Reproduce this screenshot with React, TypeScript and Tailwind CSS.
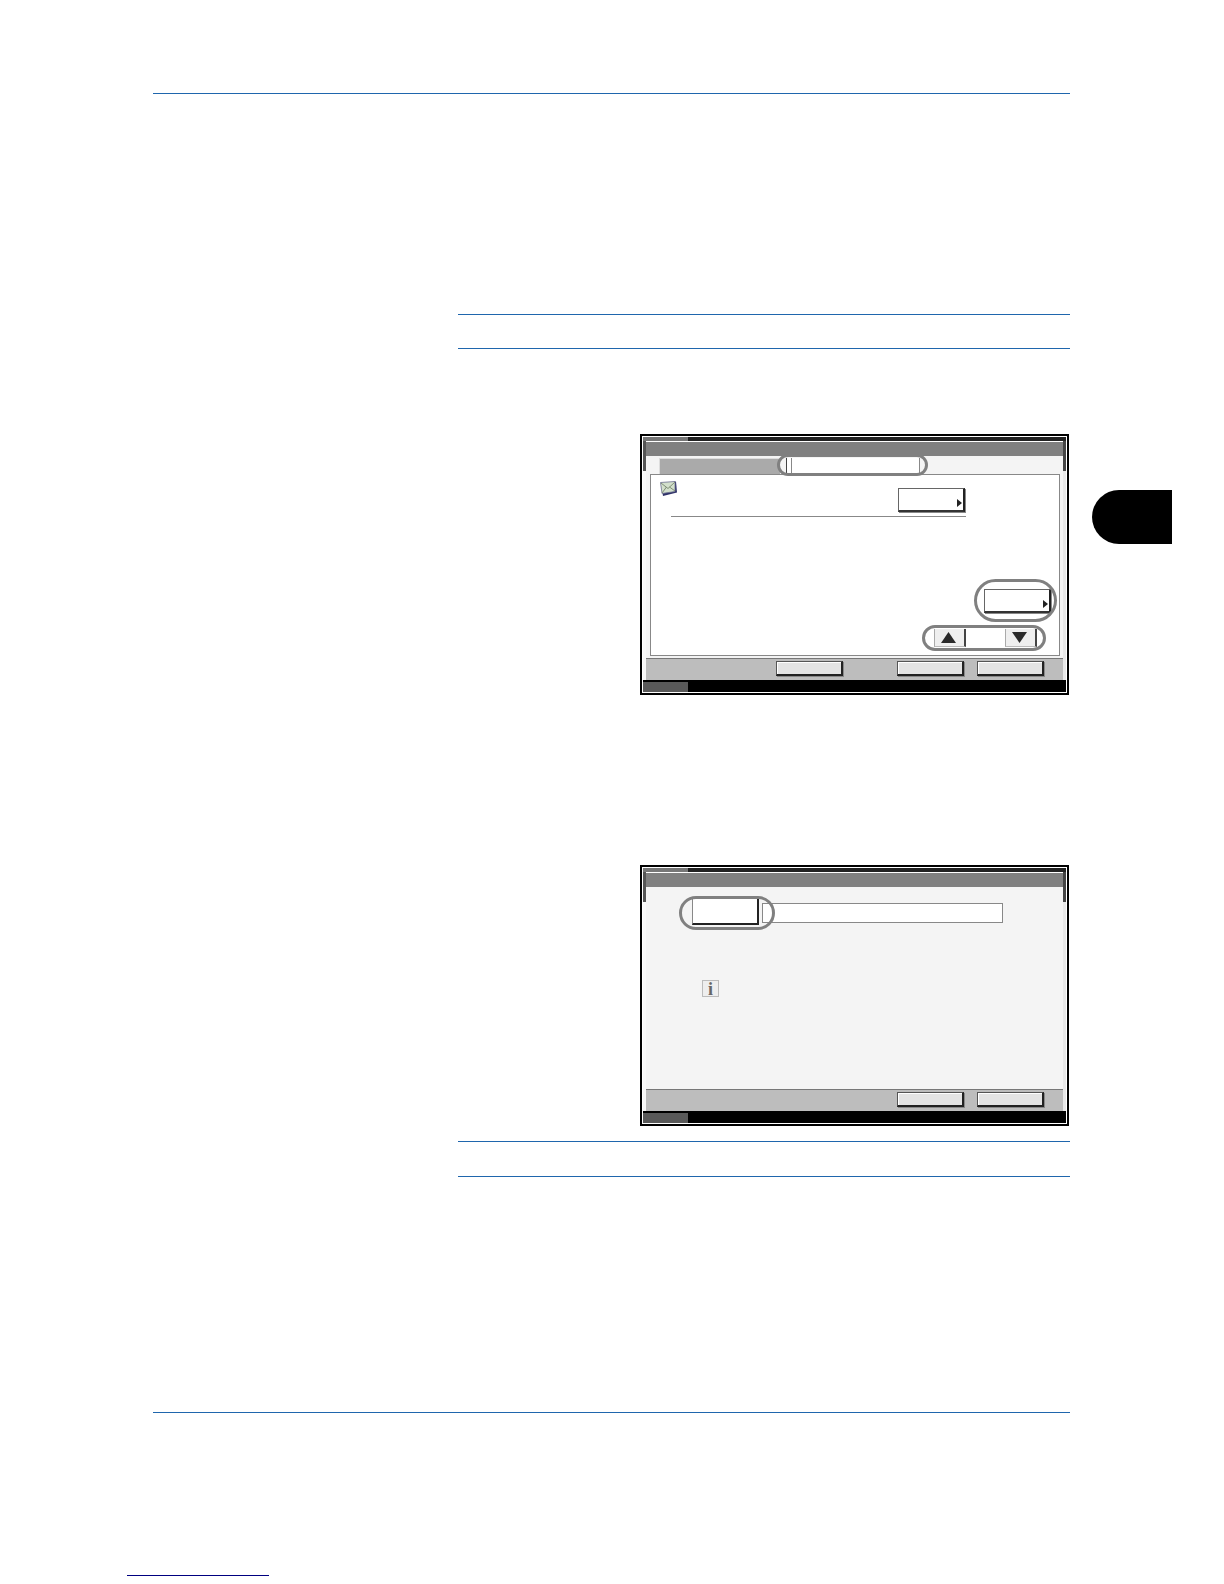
import type { ReactNode } from "react";

function Rule() {
  return <div className="h-px bg-[#1f66ad]" />;
}

function FooterButton({ className = "" }: { className?: string }) {
  return (
    <div
      className={`w-[67px] h-[15px] bg-[#e4e4e4] border border-[#555] border-r-2 border-b-2 border-r-[#222] border-b-[#222] shadow-[inset_1px_1px_0_#fff,1px_1px_0_#888] ${className}`}
    />
  );
}

function ArrowButton({ className = "" }: { className?: string }) {
  return (
    <div
      className={`w-[67px] h-[24px] flex items-end justify-end pr-[1px] pb-[3px] bg-white border border-[#666] border-r-2 border-b-2 border-r-[#222] border-b-[#333] shadow-[1px_1px_0_#888] ${className}`}
    >
      <svg width="5" height="8" viewBox="0 0 5 8">
        <path d="M0 0L5 4L0 8Z" fill="#222" />
      </svg>
    </div>
  );
}

function ScrollButton({ up }: { up?: boolean }) {
  return (
    <div className="w-[32px] h-[18px] flex items-center justify-center pr-[3px] bg-[#efefef] border-l border-[#aaa] border-r-2 border-r-[#444] border-b border-b-[#bbb]">
      <svg width="15" height="11" viewBox="0 0 15 11">
        <path d={up ? "M7.5 0L15 11H0Z" : "M0 0H15L7.5 11Z"} fill="#2a2a2a" />
      </svg>
    </div>
  );
}

// gray rounded marker drawn over the screen shot
function Oval({ className }: { className: string }) {
  return <div className={`absolute border-[3px] border-[#808080] rounded-full ${className}`} />;
}

function MailIcon() {
  return (
    <svg width="17" height="15" viewBox="0 0 17 15">
      <path d="M1 2.5L16 0.5L17 11.5L3 15Z" fill="#2f3168" />
      <path d="M0.5 1.5L15 0.5L15 10.5L2 12.5Z" fill="#d3e0cc" stroke="#6d7090" strokeWidth="0.8" />
      <path d="M1 2L8 7.5L15 1M2 12L6.5 6M15 10L9.5 6" fill="none" stroke="#75856c" strokeWidth="0.9" />
    </svg>
  );
}

function Screen({ children, footer, overlays }: { children: ReactNode; footer: ReactNode; overlays: ReactNode }) {
  return (
    <div className="relative w-[429px] h-[261px] shrink-0 border-2 border-black p-px bg-white flex flex-col">
      <div className="h-[4px] bg-[#222] shrink-0">
        <div className="w-[45px] h-full bg-[#777]" />
      </div>
      <div className="flex-1 flex min-h-0">
        <div className="w-[3px] bg-[#f8f8f8]">
          <div className="h-[30px] bg-[#555]" />
        </div>
        <div className="flex-1 flex flex-col min-w-0 pt-px">
          <div className="h-[14px] bg-[#808080] shrink-0" />
          <div className="flex-1 bg-[#f4f4f4] flex flex-col min-h-0">{children}</div>
          <div className="h-[22px] shrink-0 bg-[#bdbdbd] border-t border-[#777] pt-[2px] pr-[19px] flex justify-end gap-[13px]">
            {footer}
          </div>
        </div>
        <div className="w-[3px] bg-[#e8e8e8]">
          <div className="h-[30px] bg-[#444]" />
        </div>
      </div>
      <div className="h-[12px] shrink-0 bg-black pt-[2px]">
        <div className="w-[45px] h-[10px] bg-[#595959]" />
      </div>
      {overlays}
    </div>
  );
}

function SendScreen() {
  return (
    <Screen
      footer={
        <>
          <FooterButton className="mr-[41px]" />
          <FooterButton />
          <FooterButton />
        </>
      }
      overlays={
        <>
          <Oval className="left-[135px] top-[18px] w-[151px] h-[22px]" />
          <Oval className="left-[332px] top-[143px] w-[83px] h-[43px]" />
          <Oval className="left-[280px] top-[189px] w-[124px] h-[26px]" />
        </>
      }
    >
      {/* tabs */}
      <div className="h-[18px] shrink-0 pl-[13px] pt-[2px] flex">
        <div className="w-[121px] h-[16px] bg-[#aaaaaa] border-t border-l border-[#ddd]" />
        <div className="w-[134px] h-[16px] bg-white border-l border-l-[#444] border-r border-r-[#888] ml-[6px]">
          <div className="w-[5px] h-full border-r border-[#888]" />
        </div>
      </div>
      {/* panel */}
      <div className="h-[182px] shrink-0 ml-[4px] mr-[3px] bg-white border border-[#888] flex flex-col">
        <div className="flex items-start pl-[9px] pt-[6px]">
          <MailIcon />
          <ArrowButton className="ml-[221px] mt-[7px]" />
        </div>
        <div className="ml-[20px] mt-[4px] w-[295px] h-px bg-[#888]" />
        <ArrowButton className="self-end mr-[8px] mt-[72px]" />
        <div className="self-end mr-[22px] mt-[16px] flex gap-[39px]">
          <ScrollButton up />
          <ScrollButton />
        </div>
      </div>
    </Screen>
  );
}

function NameScreen() {
  return (
    <Screen
      footer={
        <>
          <FooterButton />
          <FooterButton />
        </>
      }
      overlays={<Oval className="left-[37px] top-[29px] w-[96px] h-[34px]" />}
    >
      <div className="flex items-start pl-[46px] pt-[10px]">
        <div className="w-[67px] h-[28px] bg-white border-l border-[#888] border-r-2 border-b-2 border-r-[#222] border-b-[#222]" />
        <div className="ml-[3px] mt-[6px] w-[241px] h-[20px] bg-white border border-[#888]" />
      </div>
      <div className="ml-[56px] mt-[55px] w-[17px] h-[17px] bg-[#eeeeee] border border-[#bbb] flex items-center justify-center font-['Liberation_Serif',serif] font-bold text-[18px] leading-none text-[#666]">
        i
      </div>
    </Screen>
  );
}

export default function App() {
  return (
    <div className="w-[1224px] h-[1584px] bg-white overflow-hidden pl-[153px] pt-[93px]">
      <div className="w-[917px]">
        <Rule />
        <div className="ml-[305px] mt-[220px]">
          <Rule />
          <div className="mt-[33px]">
            <Rule />
          </div>
        </div>
      </div>

      <div className="ml-[487px] mt-[85px] flex items-start">
        <SendScreen />
        {/* chapter tab */}
        <div className="ml-[23px] mt-[56px] w-[80px] h-[54px] bg-black rounded-l-[27px]" />
      </div>

      <div className="ml-[487px] mt-[170px] flex">
        <NameScreen />
      </div>

      <div className="w-[917px]">
        <div className="ml-[305px] mt-[15px]">
          <Rule />
          <div className="mt-[34px]">
            <Rule />
          </div>
        </div>
        <div className="mt-[235px]">
          <Rule />
        </div>
      </div>

      <div className="-ml-[26px] mt-[162px] w-[142px] h-px bg-[#000080]" />
    </div>
  );
}
